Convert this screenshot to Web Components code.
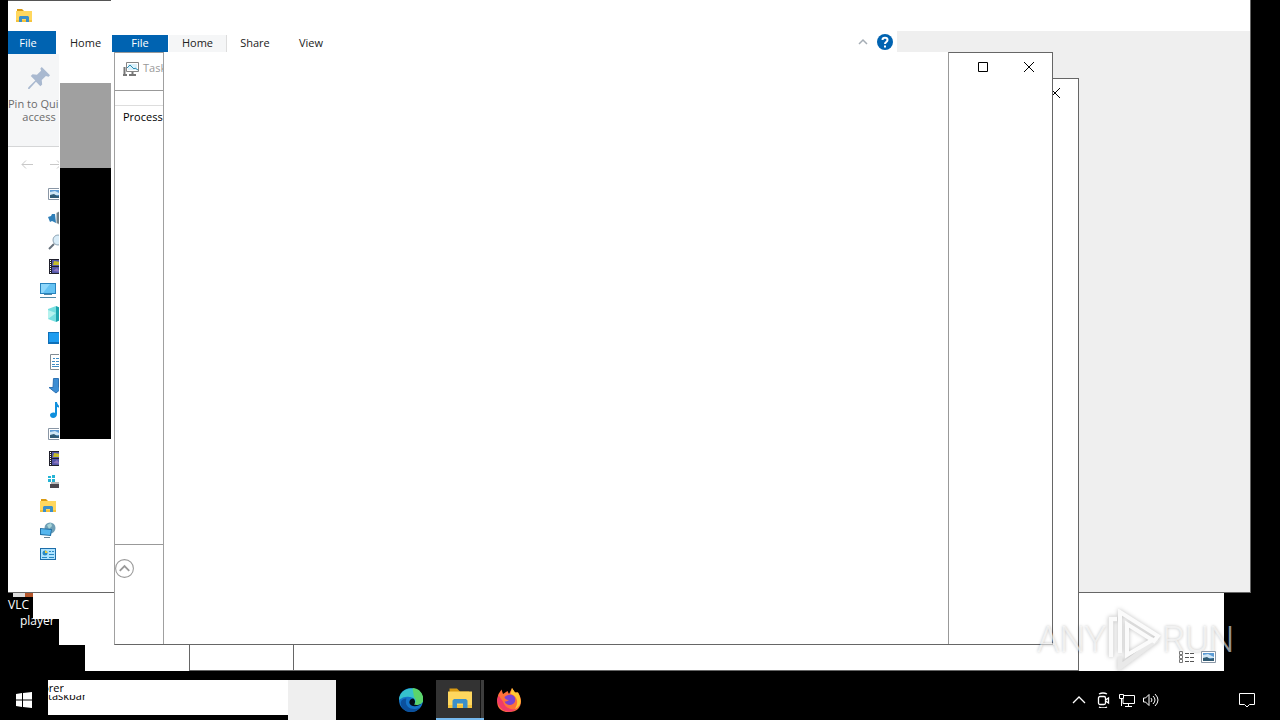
<!DOCTYPE html>
<html lang="en">
<head>
<meta charset="utf-8">
<title>Desktop</title>
<style>
    html, body {
        margin: 0;
        height: 100%;
        overflow: hidden;
        background: black;
        font: 11px/13px "Open Sans", "Noto Sans", sans-serif;
    }
</style>
</head>
<body>
<desk-top></desk-top>

<script>
const ICONS = {
    folder: `<path fill="#d99a12" d="M1 1h5l2 2h6v4H1z"/><path fill="#ffd75e" d="M0 3h16v11H0z"/><path fill="#f5c33c" d="M0 12h16v2H0z"/><path fill="#3b8fc9" d="M3 14V9l1-1h8l1 1v5h-3v-3H6v3z"/>`,
    pin: `<path fill="#a9b9d0" d="M10 0l6 6-1 1-2-.5-3 3 .3 3.2-1.3 1.3-3.2-3.3L1 16H0l.3-1.2 5-5L2 6.5 3.300 5.300l3.200.4 3-3L9 1z"/>`,
    back: `<path fill="none" stroke="#c8c8c8" d="M14 7.500H3M7 3.500l-4 4 4 4"/>`,
    forward: `<path fill="none" stroke="#c8c8c8" d="M2 7.500h11M9 3.500l4 4-4 4"/>`,
    picture: `<path fill="#fff" stroke="#8996a5" d="M.5 2.500h14v11H.5z"/><path fill="#5b9bd5" d="M2 4h11v8H2z"/><path fill="#cfe6f5" d="M2 6l5-1 6 3v1H2z"/><path fill="#315b74" d="M2 9l4-1 3 2 4-1v3H2z"/>`,
    saved: `<path fill="#b9c2c6" d="M8 3l4-2 3 1v12l-3 1-4-2z"/><path fill="#6f7e86" d="M9 3l3-2v13l-3-1z"/><path fill="#2f7fb8" d="M0 7l3-1 1-2 3 0 1 9-4-2-2 1z"/>`,
    search: `<circle cx="10" cy="6" r="5" fill="#d8ecf8" stroke="#8fa5b5"/><path stroke="#66717c" stroke-width="2" d="M6 10l-5 5"/>`,
    film: `<path fill="#20202c" d="M1 1h14v15H1z"/><path stroke="#fff" stroke-dasharray="1 1" d="M2.500 2v14M13.500 2v14"/><path fill="#5458aa" d="M4 2h8v6H4zM4 9h8v6H4z"/><path fill="#c5bc2b" d="M6 3l6 1v3H5z"/><path fill="#8d75bf" d="M5 13l4-3 3 4z"/>`,
    pc: `<path fill="#2783bd" d="M0 1h16v11H0z"/><path fill="#65c2f2" d="M1 2h14v9H1z"/><path fill="#8ed7fb" d="M1 2h9l-7 9H1z"/><path stroke="#4f87a6" d="M4 12.500h8M0 15.500h16"/>`,
    cube: `<path fill="#77dfe0" d="M0 3l8-3v16l-8-3z"/><path fill="#1ba4ad" d="M8 0l7 3v10l-7 3z"/><path fill="#b5f2ee" d="M0 4l8 3-8 6z"/>`,
    desk: `<path fill="#0e6fb8" d="M0 2h16v12H0z"/><path fill="#1e9cef" d="M1 3h14v9H1z"/>`,
    doc: `<path fill="#fff" stroke="#808b94" d="M2.500.5h11v15h-11z"/><path stroke="#3e8cc5" d="M5 4.500h2M8 4.500h4M4 7.500h3M8 7.500h4M4 10.500h3M8 10.500h4M4 12.500h8"/>`,
    down: `<path fill="#3c8dd3" stroke="#2d72b4" d="M5.500.5h5v9h4L8 15 1 9.500h4z"/>`,
    music: `<path fill="#0f8fdd" d="M7 0h2c0 3 4 4 3 8-.5-2-1-3-3-3v7c0 5-7 5-7 1 0-2 3-3 5-2z"/>`,
    disk: `<path fill="#25b4d5" d="M0 2h3v2H0zM4 1h3v3H4zM0 5h3v3H0zM4 5h3v3H4z"/><path fill="#b9b9b9" d="M3 8h12v2H3z"/><path fill="#4b474d" d="M2 10h14v4H2z"/>`,
    network: `<circle cx="10" cy="6" r="5.500" fill="#6f9fb6"/><path fill="#a7d4d8" d="M7 3l4-2 1 3-3 3z"/><path fill="#2271a6" d="M0 6l12 1-1 7-11-1z"/><path fill="#55b6ee" d="M1 7l10 1-1 5-9-1z"/><path stroke="#6d8594" d="M4 15.500h6"/>`,
    panel: `<path fill="#1d6da9" d="M0 2h16v12H0z"/><path fill="#aee3ff" d="M1 3h14v10H1z"/><circle cx="5" cy="7" r="2.500" fill="#2a8ac4"/><path fill="#efcd3d" d="M5 4.500A2.500 2.500 0 0 1 7.500 7H5z"/><path stroke="#2a8ac4" d="M9 5.500h2M12 5.500h2M9 8.500h5M2 11.500h5M9 11.500h5"/>`,
    task: `<path fill="#fff" stroke="#858585" d="M3.500 1.500h12v9h-12z"/><path fill="#d9f0fa" d="M5 3h9v6H5z"/><path fill="none" stroke="#2b8eb5" d="M4 7l3-3 4 4 1-1 3 2"/><path stroke="#777" stroke-width="2" d="M9.500 11v3M6 14h7M1.500 6v9M0 14h4"/>`,
    chevron: `<path fill="none" stroke="#a5adb5" stroke-width="1.500" d="M4 10l4-4 4 4"/>`,
    help: `<circle cx="8" cy="8" r="8" fill="#0063b1"/><path fill="none" stroke="#fff" stroke-width="2" d="M5.500 6c0-3 5-3 5 0 0 2-2.500 2-2.500 4M8 11.500v2"/>`,
    fold: `<circle cx="8" cy="8" r="7.500" fill="#fff" stroke="#999" stroke-width=".9"/><path fill="none" stroke="#999" stroke-width="1.500" d="M4 10l4-4 4 4"/>`,
    max: `<path fill="none" stroke="#000" d="M3.500 3.500h9v9h-9z"/>`,
    close: `<path stroke="#000" d="M3 3l10 10M13 3L3 13"/>`,
    start: `<path fill="#fff" d="M0 2l6-1v6.500H0zM7 1l9-1v7.500H7zM0 8.500h6V15l-6-1zM7 8.500h9V16l-9-1z"/>`,
    edge: `<circle cx="8" cy="8" r="8" fill="#1473c8"/><path fill="#35c1cc" d="M0 8C0-1 14-3 16 7c.5 4-4 5-6 4 2-2 0-5-3-5-4-1-7 2-7 2z"/><path fill="#5bd46b" d="M9 0c5 0 8 5 7 9-1 2-4 3-6 2 2-2 1-4 0-5z"/><path fill="#0b509d" d="M5 7c-2 5 3 9 9 6-3 4-9 4-12 0C0 9 2 7 5 7z"/><path fill="#030c18" d="M9.500 7C7 7 6 10 8 11.500c2 1.200 5 .7 7-1-2 1-4 1-5 .5 1-1 1-3-.5-4z"/>`,
    firefox: `<path fill="#ff7139" d="M1 4l2-3 1 3 3-2 1 2 2-4 2 3 2 0c4 6 2 13-6 13S-1 10 1 4z"/><path fill="#ffc934" d="M10 0l2 3 2 0c3 6 2 9-2 11 3-5 1-9-3-10z"/><path fill="#f23b68" d="M0 8c1 7 8 10 13 6-4 1-8-1-9-5L1 5z"/><path fill="#7a43d2" d="M5 6c4-3 8-1 7 3-1 3-6 3-7 0 1 0 2 0 3-1-2 0-3-1-3-2z"/>`,
    up: `<path fill="none" stroke="#fff" stroke-width="1.300" d="M2 11l6-6 6 6"/>`,
    camera: `<rect x="3.500" y="4.500" width="7" height="8" rx="1.500" fill="none" stroke="#fff" stroke-width="1.300"/><path fill="none" stroke="#fff" stroke-width="1.300" d="M10.500 8l3-2v5l-3-2M4 2c3-1.500 5-1.500 8 0M4 15c3 1.500 5 1.500 8 0"/>`,
    net: `<path fill="none" stroke="#fff" d="M5 3.500h10.500v8H4V7M9.500 12v3M6 14.500h7"/><path fill="#000" stroke="#fff" d="M.5 2.500h4v4h-4zM2.500 7v7"/>`,
    sound: `<path fill="none" stroke="#fff" d="M.5 6v4h2L6 13.500v-11L2.500 6zM8 6q2 2 0 4M10 4q4 4 0 8M12 2q6 6 0 12"/>`,
    note: `<path fill="none" stroke="#fff" d="M.5 1.500h15v11h-5L8 15l-2.500-2.500h-5z"/>`,
    details: `<path fill="none" stroke="#777" d="M.5 2.500h3v3h-3zM.5 6.500h3v3h-3zM.5 10.500h3v3h-3z"/><path stroke="#555" stroke-dasharray="4 1" d="M6 4.500h10M6 8.500h10M6 12.500h10"/>`
};

// <sys-icon name="folder"></sys-icon>, size comes from --size
class SysIcon extends HTMLElement {
    constructor() {
        super();
        const shadowRoot = this.attachShadow({ mode: 'open' });
        shadowRoot.innerHTML = `
            <style>
            :host { display: block; flex: none; width: var(--size, 16px); height: var(--size, 16px); }
            svg { display: block; width: 100%; height: 100%; }
            </style>
            <svg viewBox="0 0 16 16" aria-hidden="true">${ICONS[this.getAttribute('name')]}</svg>
        `;
    }
}

class DeskWindow extends HTMLElement {
    constructor() {
        super();
        const shadowRoot = this.attachShadow({ mode: 'open' });
        shadowRoot.innerHTML = `
            <style>
            :host {
                display: flex;
                box-sizing: border-box;
                overflow: hidden;
                background: white;
                border: 1px solid #666;
            }
            </style>
            <slot></slot>
        `;
    }
}

class FolderTree extends HTMLElement {
    constructor() {
        super();
        const shadowRoot = this.attachShadow({ mode: 'open' });
        const rows = ['picture', 'saved', 'search', 'film', '*pc', 'cube', 'desk', 'doc',
            'down', 'music', 'picture', 'film', 'disk', '*folder', '*network', '*panel'];
        shadowRoot.innerHTML = `
            <style>
            :host { display: block; }
            ul { list-style: none; margin: 0; padding: 0; }
            li { display: flex; align-items: center; height: 24px; padding-left: 40px; }
            li.top { padding-left: 32px; }
            </style>
            <ul>
                ${rows.map(r => `<li class="${r[0] === '*' ? 'top' : ''}"><sys-icon name="${r.replace('*', '')}"></sys-icon></li>`).join('')}
            </ul>
        `;
    }
}

class ExplorerPane extends HTMLElement {
    constructor() {
        super();
        const shadowRoot = this.attachShadow({ mode: 'open' });
        shadowRoot.innerHTML = `
            <style>
            :host { display: block; overflow: hidden; background: white; }
            button { font: inherit; border: 0; padding: 0; background: none; }
            .file { display: block; width: 48px; height: 23px; padding-right: 8px; background: #0063b1; color: white; }
            .ribbon {
                box-sizing: border-box;
                height: 93px;
                padding-top: 13px;
                background: #f5f6f7;
                border-bottom: 1px solid #d5d6d7;
            }
            .pin {
                --size: 22px;
                display: flex;
                flex-direction: column;
                align-items: center;
                gap: 8px;
                width: 62px;
                color: #6b6b6b;
                white-space: nowrap;
            }
            .pin span { width: 62px; }
            .pin .line { display: block; text-align: left; }
            .nav { display: flex; align-items: center; gap: 13px; height: 35px; padding-left: 11px; }
            </style>
            <button class="file">File</button>
            <div class="ribbon">
                <button class="pin"><sys-icon name="pin"></sys-icon><span><span class="line">Pin to Qui</span>access</span></button>
            </div>
            <div class="nav">
                <button aria-label="Back"><sys-icon name="back"></sys-icon></button>
                <button aria-label="Forward"><sys-icon name="forward"></sys-icon></button>
            </div>
            <folder-tree></folder-tree>
        `;
    }
}

class RibbonTabs extends HTMLElement {
    constructor() {
        super();
        const shadowRoot = this.attachShadow({ mode: 'open' });
        shadowRoot.innerHTML = `
            <style>
            :host { display: flex; align-items: flex-end; height: 21px; background: white; }
            button {
                box-sizing: border-box;
                flex: none;
                width: 56px;
                height: 17px;
                padding: 0 0 2px;
                border: 0;
                background: none;
                font: inherit;
                color: #222;
            }
            .file { background: #0063b1; color: white; }
            .home { width: 58px; margin-left: 1px; background: #f5f6f7; border-right: 1px solid #ddd; }
            .icon { display: flex; align-items: center; justify-content: center; width: 22px; height: 20px; padding: 0; }
            .first { margin-left: auto; }
            .last { margin-right: 1px; }
            </style>
            <button class="file">File</button>
            <button class="home">Home</button>
            <button>Share</button>
            <button>View</button>
            <button class="icon first" aria-label="Collapse"><sys-icon name="chevron"></sys-icon></button>
            <button class="icon last" aria-label="Help"><sys-icon name="help"></sys-icon></button>
        `;
    }
}

class ExplorerWindow extends HTMLElement {
    constructor() {
        super();
        const shadowRoot = this.attachShadow({ mode: 'open' });
        shadowRoot.innerHTML = `
            <style>
            :host {
                display: flex;
                flex-direction: column;
                box-sizing: border-box;
                background: white;
                border: solid #666;
                border-width: 0 1px 1px 0;
            }
            .title { display: flex; box-sizing: border-box; height: 31px; }
            .title div { box-sizing: border-box; width: 103px; padding: 7px 8px; border-top: 1px solid #555; }
            .body { flex: 1; display: flex; min-height: 0; }
            explorer-pane { flex: none; width: 51px; }
            .trail { flex: none; display: flex; flex-direction: column; width: 51px; margin: 0 1px; }
            .home { height: 52px; padding: 5px 0 0 10px; box-sizing: border-box; }
            .grey { height: 85px; background: #a0a0a0; }
            .black { height: 271px; background: black; }
            .main { flex: 1; }
            .empty { width: 353px; background: #efefef; }
            </style>
            <div class="title"><div><sys-icon name="folder"></sys-icon></div></div>
            <div class="body">
                <explorer-pane></explorer-pane>
                <div class="trail">
                    <div class="home">Home</div>
                    <div class="grey"></div>
                    <div class="black"></div>
                </div>
                <div class="main"><ribbon-tabs></ribbon-tabs></div>
                <div class="empty"></div>
            </div>
        `;
    }
}

class TaskManager extends HTMLElement {
    constructor() {
        super();
        const shadowRoot = this.attachShadow({ mode: 'open' });
        shadowRoot.innerHTML = `
            <style>
            :host { flex: 1; display: flex; }
            .side {
                display: flex;
                flex-direction: column;
                box-sizing: border-box;
                width: 49px;
                overflow: hidden;
                border-top: 1px solid #999;
                border-right: 1px solid #a0a0a0;
            }
            .title {
                display: flex;
                gap: 4px;
                box-sizing: border-box;
                height: 38px;
                padding: 8px 0 0 8px;
                border-bottom: 1px solid #999;
                color: #999;
            }
            .tab {
                margin-top: 14px;
                padding: 4px 0 6px 8px;
                border: 0;
                border-top: 1px solid #ddd;
                background: none;
                font: inherit;
                color: black;
                text-align: left;
            }
            .foot { --size: 19px; height: 85px; margin-top: auto; padding-top: 14px; border-top: 1px solid #999; }
            .foot button { display: block; padding: 0; border: 0; background: none; }
            .main { flex: 1; }
            .buttons {
                display: flex;
                box-sizing: border-box;
                width: 104px;
                padding: 6px 15px 0 26px;
                justify-content: space-between;
                border: solid #999;
                border-width: 1px 0 0 1px;
                border-top-color: #666;
            }
            .buttons button { height: 16px; padding: 0; border: 0; background: none; }
            </style>
            <div class="side">
                <div class="title"><sys-icon name="task"></sys-icon><span>Task</span></div>
                <button class="tab">Process</button>
                <div class="foot"><button aria-label="Fewer details"><sys-icon name="fold"></sys-icon></button></div>
            </div>
            <div class="main"></div>
            <div class="buttons">
                <button aria-label="Maximize"><sys-icon name="max"></sys-icon></button>
                <button aria-label="Close"><sys-icon name="close"></sys-icon></button>
            </div>
        `;
    }
}

class WaterMark extends HTMLElement {
    constructor() {
        super();
        const shadowRoot = this.attachShadow({ mode: 'open' });
        shadowRoot.innerHTML = `
            <style>
            :host {
                display: flex;
                align-items: center;
                justify-content: space-between;
                width: 194px;
                font: 300 36px/40px Roboto, sans-serif;
                color: rgba(255, 255, 255, .6);
                text-shadow: 0 0 3px rgba(0, 0, 0, .25);
            }
            svg { flex: none; width: 56px; height: 62px; filter: drop-shadow(0 0 2px rgba(0, 0, 0, .25)); }
            </style>
            <span>ANY</span>
            <svg viewBox="0 0 56 62" aria-hidden="true">
                <path fill="none" stroke="#e9e9e9" stroke-width="5" d="M5 48V10h6M14 48v10l38-28"/>
                <path fill="none" stroke="#fbfbfb" stroke-width="4" d="M5 48V10h6M14 44V3l38 24-4 5-27-17v31l27-16"/>
            </svg>
            <span>RUN</span>
        `;
    }
}

class TaskBar extends HTMLElement {
    constructor() {
        super();
        const shadowRoot = this.attachShadow({ mode: 'open' });
        shadowRoot.innerHTML = `
            <style>
            :host { display: flex; height: 40px; background: black; }
            button {
                display: flex;
                align-items: center;
                justify-content: center;
                flex: none;
                width: 48px;
                height: 40px;
                padding: 0;
                border: 0;
                background: none;
            }
            .app { --size: 24px; }
            .open {
                box-sizing: border-box;
                margin: 0 1px;
                background: #333;
                border-bottom: 2px solid #76b9ed;
                box-shadow: inset -3px 0 #3d3d3d, inset -4px 0 #111;
            }
            .tip { width: 240px; height: 35px; background: white; color: black; }
            .tip div { overflow: hidden; }
            .name { display: flex; justify-content: flex-end; width: 16px; height: 15px; padding-top: 1px; box-sizing: border-box; }
            .hint { display: flex; align-items: flex-end; width: 48px; height: 9px; line-height: 16px; }
            .grey { width: 48px; margin-right: 51px; background: #efefef; }
            .tray { display: flex; margin: 0 60px 0 auto; }
            .tray button { width: 24px; }
            .note { margin-right: 9px; }
            </style>
            <button aria-label="Start"><sys-icon name="start"></sys-icon></button>
            <div class="tip">
                <div class="name">orer</div>
                <div class="hint">taskbar</div>
            </div>
            <div class="grey"></div>
            <button class="app" aria-label="Edge"><sys-icon name="edge"></sys-icon></button>
            <button class="app open" aria-label="File Explorer"><sys-icon name="folder"></sys-icon></button>
            <button class="app" aria-label="Firefox"><sys-icon name="firefox"></sys-icon></button>
            <div class="tray">
                <button aria-label="Hidden icons"><sys-icon name="up"></sys-icon></button>
                <button aria-label="Meet now"><sys-icon name="camera"></sys-icon></button>
                <button aria-label="Network"><sys-icon name="net"></sys-icon></button>
                <button aria-label="Volume"><sys-icon name="sound"></sys-icon></button>
            </div>
            <button class="note" aria-label="Notifications"><sys-icon name="note"></sys-icon></button>
        `;
    }
}

class DeskTop extends HTMLElement {
    constructor() {
        super();
        const shadowRoot = this.attachShadow({ mode: 'open' });
        shadowRoot.innerHTML = `
            <style>
            :host { display: flex; flex-direction: column; height: 100vh; color: #222; }
            .space { flex: 1; position: relative; overflow: hidden; }
            .space > * { position: absolute; }
            .vlc { left: 8px; bottom: 51px; color: white; font-size: 12px; line-height: 16px; }
            .vlc span { display: block; padding-left: 12px; }
            .vlc i { display: block; width: 20px; height: 10px; margin-left: 5px; background: linear-gradient(90deg, #ddd 60%, #b5562a 60%); }
            .step { background: white; }
            .step1 { left: 33px; right: 56px; top: 592px; bottom: 61px; }
            .step2 { left: 59px; right: 56px; top: 592px; bottom: 35px; }
            .step3 { left: 85px; right: 56px; top: 592px; bottom: 9px; }
            .views { display: flex; gap: 6px; right: 63px; bottom: 15px; }
            .views button { padding: 0; border: 0; background: none; }
            explorer-window { left: 8px; right: 29px; top: 0; bottom: 87px; }
            .w1 { left: 189px; right: 201px; top: 78px; bottom: 9px; }
            .w2 { left: 293px; right: 201px; top: 78px; bottom: 9px; }
            .w2 button { height: 16px; margin: 6px 15px 0 auto; padding: 0; border: 0; background: none; }
            .w3 { left: 114px; right: 227px; top: 52px; bottom: 35px; border-top: 0; border-left-color: #a0a0a0; }
            water-mark { right: 49px; bottom: 9px; }
            </style>
            <div class="space">
                <div class="vlc"><i></i>VLC<span>player</span></div>
                <div class="step step1"></div>
                <div class="step step2"></div>
                <div class="step step3"></div>
                <explorer-window></explorer-window>
                <desk-window class="w1"></desk-window>
                <desk-window class="w2"><button aria-label="Close"><sys-icon name="close"></sys-icon></button></desk-window>
                <desk-window class="w3"><task-manager></task-manager></desk-window>
                <water-mark></water-mark>
                <div class="views">
                    <button aria-label="Details"><sys-icon name="details"></sys-icon></button>
                    <button aria-label="Large icons"><sys-icon name="picture"></sys-icon></button>
                </div>
            </div>
            <task-bar></task-bar>
        `;
    }
}

customElements.define('sys-icon', SysIcon);
customElements.define('desk-window', DeskWindow);
customElements.define('folder-tree', FolderTree);
customElements.define('explorer-pane', ExplorerPane);
customElements.define('ribbon-tabs', RibbonTabs);
customElements.define('explorer-window', ExplorerWindow);
customElements.define('task-manager', TaskManager);
customElements.define('water-mark', WaterMark);
customElements.define('task-bar', TaskBar);
customElements.define('desk-top', DeskTop);
</script>
</body>
</html>
